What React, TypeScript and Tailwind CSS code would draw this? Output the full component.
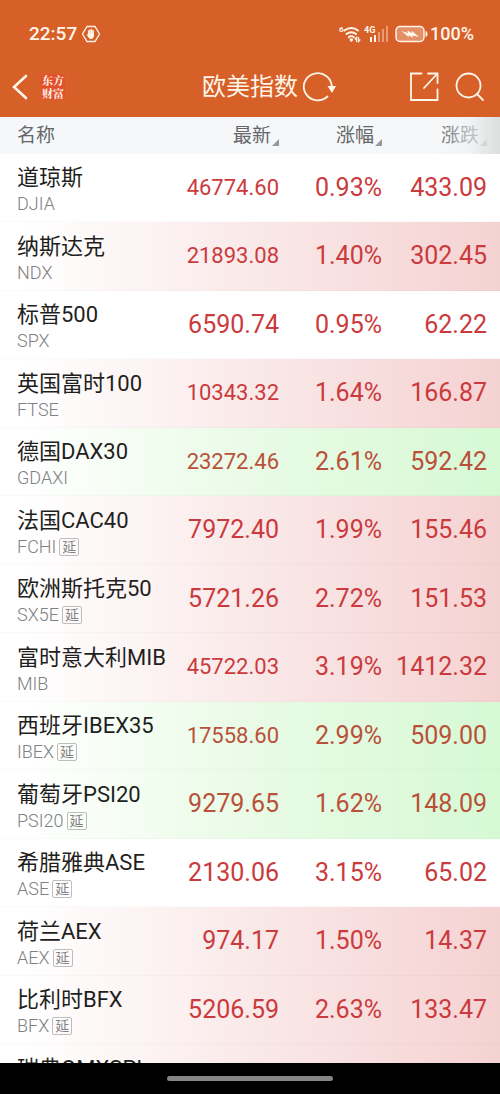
import clsx from "clsx";

type Tone = "none" | "up" | "down";

interface IndexQuote {
  name: string;
  code: string;
  price: string;
  percent: string;
  change: string;
  tone: Tone;
  delayed?: boolean;
}

const quotes: IndexQuote[] = [
  { name: "道琼斯", code: "DJIA", price: "46774.60", percent: "0.93%", change: "433.09", tone: "none" },
  { name: "纳斯达克", code: "NDX", price: "21893.08", percent: "1.40%", change: "302.45", tone: "up" },
  { name: "标普500", code: "SPX", price: "6590.74", percent: "0.95%", change: "62.22", tone: "none" },
  { name: "英国富时100", code: "FTSE", price: "10343.32", percent: "1.64%", change: "166.87", tone: "up" },
  { name: "德国DAX30", code: "GDAXI", price: "23272.46", percent: "2.61%", change: "592.42", tone: "down" },
  { name: "法国CAC40", code: "FCHI", price: "7972.40", percent: "1.99%", change: "155.46", tone: "up", delayed: true },
  { name: "欧洲斯托克50", code: "SX5E", price: "5721.26", percent: "2.72%", change: "151.53", tone: "up", delayed: true },
  { name: "富时意大利MIB", code: "MIB", price: "45722.03", percent: "3.19%", change: "1412.32", tone: "up" },
  { name: "西班牙IBEX35", code: "IBEX", price: "17558.60", percent: "2.99%", change: "509.00", tone: "down", delayed: true },
  { name: "葡萄牙PSI20", code: "PSI20", price: "9279.65", percent: "1.62%", change: "148.09", tone: "down", delayed: true },
  { name: "希腊雅典ASE", code: "ASE", price: "2130.06", percent: "3.15%", change: "65.02", tone: "none", delayed: true },
  { name: "荷兰AEX", code: "AEX", price: "974.17", percent: "1.50%", change: "14.37", tone: "up", delayed: true },
  { name: "比利时BFX", code: "BFX", price: "5206.59", percent: "2.63%", change: "133.47", tone: "up", delayed: true },
  { name: "瑞典OMXSPI", code: "", price: "", percent: "", change: "", tone: "up" },
];

const rowTones: Record<Tone, string> = {
  none: "bg-white text-[#cb3a3c]",
  up: "bg-linear-to-r from-white from-5% via-[#fae9e9] via-50% to-[#f5d2d2] text-[#cb3a3c]",
  down: "bg-linear-to-r from-white from-5% via-[#e9fbe6] via-50% to-[#d6f9d4] text-[#b9513a]",
};

function StatusBar() {
  return (
    <div className="flex h-14 items-end justify-between pr-[26px] pl-[29px] pb-[10px] font-medium">
      <div className="flex items-center gap-1 text-[19px] leading-6">
        <span>22:57</span>
        <svg width="20" height="18" viewBox="0 0 20 18" fill="none">
          <path d="M6 1.5h8L18.500 9 14 16.500H6L1.500 9z" stroke="currentColor" strokeWidth="1.300" />
          <path
            d="M7.600 6v4M9.100 4.800v5M10.700 4.800v5M12.200 5.800v4.400"
            stroke="currentColor"
            strokeWidth="1.400"
            strokeLinecap="round"
          />
          <path d="M6.900 8.600h6v2.400c0 1.700-1.100 2.900-2.800 2.900-1.400 0-2-.5-2.800-1.700L5.600 9.800c.3-.6.9-.5 1.300 0z" fill="currentColor" />
        </svg>
      </div>
      <div className="flex items-center text-[18px] leading-6">
        <svg className="mr-[2px]" width="24" height="20" viewBox="0 0 24 20" fill="none">
          <text x="1" y="8" fontSize="8" fontWeight="700" fill="currentColor">6</text>
          <path
            d="M6.500 6.500a10.500 10.500 0 0 1 13.500 0M8.500 10a7 7 0 0 1 9.500 0M10.800 13.200a3.600 3.600 0 0 1 5 0"
            stroke="currentColor"
            strokeWidth="2"
            strokeLinecap="round"
          />
          <circle cx="13.300" cy="16" r="1.700" fill="currentColor" />
          <path d="M18.500 18v-4.500l-1.700 2M20.500 13v4.500l1.700-2" stroke="currentColor" strokeWidth="1.300" />
        </svg>
        <svg className="mr-[6px]" width="25" height="20" viewBox="0 0 25 20" fill="currentColor">
          <text x="0" y="9" fontSize="9" fontWeight="700">4G</text>
          <rect x="6" y="13" width="2" height="5" />
          <rect x="10" y="11" width="2" height="7" />
          <rect x="14" y="8" width="2" height="10" opacity="0.4" />
          <rect x="18" y="5" width="2" height="13" opacity="0.4" />
          <rect x="22" y="2" width="2" height="16" opacity="0.4" />
        </svg>
        <svg className="mr-[2px]" width="33" height="18" viewBox="0 0 33 18" fill="none">
          <rect x="1" y="1.500" width="28" height="15" rx="4" fill="white" fillOpacity="0.300" stroke="currentColor" strokeWidth="1.400" />
          <path d="M31 6.500c1.300.5 1.300 4.500 0 5z" fill="currentColor" stroke="currentColor" />
          <path d="M6.500 6l6.500 2-.5-2.500 4.500 2.500-.3-2.300L24 12l-6.500-1.500.6 2.300-4.600-2.500.2 1.900z" fill="currentColor" />
        </svg>
        <span>100%</span>
      </div>
    </div>
  );
}

function TitleBar() {
  return (
    <div className="grid h-[61px] grid-cols-[1fr_auto_1fr] items-center">
      <div className="flex items-center gap-3 pl-[11px]">
        <button type="button" aria-label="返回">
          <svg width="18" height="26" viewBox="0 0 18 26" fill="none">
            <path d="M15 2L3 13l12 11" stroke="currentColor" strokeWidth="2.600" strokeLinecap="round" />
          </svg>
        </button>
        <div className="rounded-sm bg-[#e3502c] px-px text-[11px] leading-[13px] font-bold font-[Noto_Serif_CJK_SC,Noto_Sans_CJK_SC,serif]">
          <div>东方</div>
          <div>财富</div>
        </div>
      </div>
      <h1 className="text-2xl">欧美指数</h1>
      <div className="flex items-center gap-4 pr-[15px] pl-[5px]">
        <button type="button" aria-label="刷新" className="mr-auto">
          <svg width="34" height="30" viewBox="0 0 34 30" fill="none">
            <path d="M28.800 15A14 13.500 0 1 0 24.500 24.500" stroke="currentColor" strokeWidth="1.800" strokeLinecap="round" />
            <path d="M24.500 14h8.500l-4 7z" fill="currentColor" />
          </svg>
        </button>
        <button type="button" aria-label="分享">
          <svg width="30" height="30" viewBox="0 0 30 30" fill="none" stroke="currentColor" strokeWidth="1.800" strokeLinecap="round">
            <path d="M12.500 1.500H2v26.500h26.500V17.500M15 16L28 2M19 1.500h9.500V11" />
          </svg>
        </button>
        <button type="button" aria-label="搜索">
          <svg width="30" height="30" viewBox="0 0 30 30" fill="none" stroke="currentColor" strokeWidth="1.800" strokeLinecap="round">
            <circle cx="13.500" cy="13.500" r="12" />
            <path d="M22 22l6 6" />
          </svg>
        </button>
      </div>
    </div>
  );
}

function SortHeader({ label }: { label: string }) {
  return (
    <button type="button" className="flex items-end">
      {label}
      <svg className="mb-[2px]" width="8" height="8" viewBox="0 0 8 8">
        <path d="M8 1v7H1z" fill="#969899" />
      </svg>
    </button>
  );
}

const columns = "grid grid-cols-[minmax(0,1fr)_100px_103px_105px] items-center pl-[17px] pr-[13px]";

export default function App() {
  return (
    <div className="flex h-screen flex-col overflow-hidden bg-white font-[Roboto,Noto_Sans_CJK_SC,sans-serif]">
      <header className="shrink-0 bg-[#d75f28] text-[#fff6ea]">
        <StatusBar />
        <TitleBar />
      </header>

      <main className="min-h-0 flex-1 overflow-y-auto [scrollbar-width:none]">
        <table className="block">
          <thead className="sticky top-0 block">
            <tr className={clsx(columns, "relative h-[37px] bg-[#f5f7f9] text-[19px] leading-6 text-[#65676a]")}>
              <th className="text-left font-normal">名称</th>
              <th className="flex justify-end font-normal"><SortHeader label="最新" /></th>
              <th className="flex justify-end font-normal"><SortHeader label="涨幅" /></th>
              <th className="flex justify-end font-normal">
                <SortHeader label="涨跌" />
                <span className="pointer-events-none absolute inset-y-0 right-0 w-16 bg-linear-to-r from-[#f5f7f9]/0 via-[#f0f1f2]/60 to-[#dcdddd]" />
              </th>
            </tr>
          </thead>
          <tbody className="block">
            {quotes.map((q) => (
              <tr
                key={q.name}
                className={clsx(
                  columns,
                  "border-b border-black/2 text-right text-[25px] leading-8 odd:h-[68px] even:h-[69px]",
                  rowTones[q.tone],
                )}
              >
                <td className="pt-[5px] text-left whitespace-nowrap">
                  <div className="text-[22px] leading-7 text-[#1f1f21]">{q.name}</div>
                  <div className="flex h-6 items-center gap-[3px] text-lg leading-6 font-light text-[#808082]">
                    {q.code}
                    {q.delayed && (
                      <span className="rounded-xs border border-[#bdbdbd] px-[2px] text-sm leading-4 font-normal">延</span>
                    )}
                  </div>
                </td>
                <td className={clsx(q.price.length > 7 && "text-[22px]")}>{q.price}</td>
                <td>{q.percent}</td>
                <td>{q.change}</td>
              </tr>
            ))}
          </tbody>
        </table>
      </main>

      <footer className="flex h-[31px] shrink-0 items-center justify-center bg-black">
        <div className="h-[5px] w-1/3 rounded-full bg-[#858585]" />
      </footer>
    </div>
  );
}
